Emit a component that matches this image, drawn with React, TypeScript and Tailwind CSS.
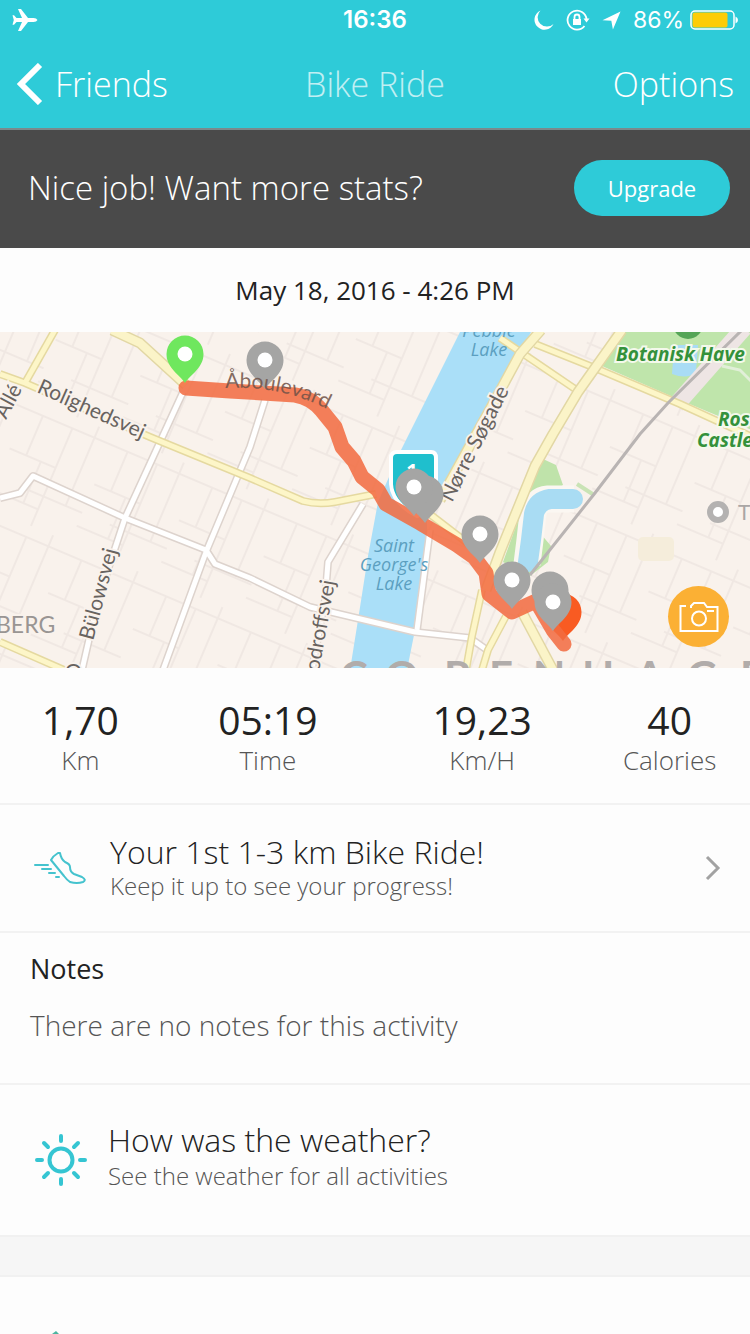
import React from "react";

type Point = { x: number; y: number };

const hiddenPins: Point[] = [
  { x: 425, y: 494 },
  { x: 550, y: 590 },
];

const grayPins: Point[] = [
  { x: 265, y: 360 },
  { x: 414, y: 487 },
  { x: 480, y: 534 },
  { x: 512, y: 580 },
  { x: 553, y: 602 },
];

const yellowRoads = [
  "M0 374 L25 383 L150 437 L250 478 L303 501 Q318 505 335 502 L376 494",
  "M25 383 L55 330",
  "M0 642 L64 670",
  "M500 338 L578 391",
  "M535 344 L595 368 L680 404 L750 436",
  "M427 512 L470 545",
  "M482 590 L472 636 L466 670",
  "M506 616 L488 650 L482 670",
];

const wideYellowRoads = [
  "M112 330 L140 343 L186 385",
  "M541 330 L520 354 L500 391 L440 500",
  "M622 330 L595 368 L578 392 L553 434 L535 466 L500 552 L486 590",
  "M522 612 L553 670",
];

const whiteRoads = [
  "M183 392 L125 518 L98 600 L82 670",
  "M0 498 L20 493 L33 476 L125 518 L206 550 L215 564 L250 578 L310 607 L415 632 L470 638 L487 650",
  "M265 400 L250 447 L206 552 L163 670",
  "M363 504 L328 562 L325 600 L312 670",
  "M430 530 L417 630",
];

const stats = [
  { value: "1,70", label: "Km" },
  { value: "05:19", label: "Time" },
  { value: "19,23", label: "Km/H" },
  { value: "40", label: "Calories" },
];

function Pin({ x, y, color, hole = true }: Point & { color: string; hole?: boolean }) {
  return (
    <g transform={`translate(${x} ${y})`}>
      <path d="M0 29 C-5 21 -18.500 14 -18.500 0 A18.500 18.500 0 1 1 18.500 0 C18.500 14 5 21 0 29Z" fill={color} />
      {hole && <circle r="7.500" fill="#fff" />}
    </g>
  );
}

function Roads({ paths, edge, fill, width }: { paths: string[]; edge: string; fill: string; width: number }) {
  return (
    <g fill="none" strokeLinejoin="round">
      {paths.map((d) => (
        <path key={d} d={d} stroke={edge} strokeWidth={width + 3} />
      ))}
      {paths.map((d) => (
        <path key={d} d={d} stroke={fill} strokeWidth={width} />
      ))}
    </g>
  );
}

function RouteMap() {
  return (
    <svg viewBox="0 332 750 336" className="block w-full" role="img" aria-label="Route map">
      <defs>
        <pattern id="blocks" width="92" height="118" patternUnits="userSpaceOnUse" patternTransform="rotate(23)">
          <path
            d="M0 12H92M0 55H50M30 86H92M18 12V55M50 12V118M74 0V86M0 100H50M34 55V100"
            fill="none"
            stroke="#f0e8e3"
            strokeWidth="2"
          />
        </pattern>
        <path id="boulevard" d="M225 388 Q285 385 334 413" />
      </defs>
      <rect x="0" y="332" width="750" height="336" fill="#f9f2ec" />
      <rect x="0" y="332" width="750" height="336" fill="url(#blocks)" />
      <rect x="638" y="537" width="36" height="24" rx="5" fill="#f5eddb" />

      <path d="M461 330 L532 330 L505 385 L440 495 L427 520 L427 556 L416 625 L407 670 L350 670 L358 620 L368 556 L378 502 L400 452Z" fill="#aadff8" />
      <path d="M620 330 H752 V430 L680 400 L602 366Z" fill="#bfe5ab" />
      <path d="M674 345 H698 L696 372 Q688 380 672 374Z" fill="#a9dcf5" />
      <path d="M744 328 L676 405" stroke="#eee5e4" strokeWidth="17" />
      <path d="M722 366 L740 370 L752 382" fill="none" stroke="#e1efd8" strokeWidth="3" />
      <path d="M543 459 L556 465 L563 485 L544 500 L540 533 L551 546 L548 562 L530 576 L503 562 L520 515Z" fill="#bfe3aa" />
      <path d="M574 499 L548 499 Q536 500 533 513 L530 540 L527 564" fill="none" stroke="#fbf7f2" strokeWidth="27" />
      <path d="M573 499 L550 499 Q537 501 534 514 L531 540 L528 562" fill="none" stroke="#a9dcf3" strokeWidth="20" strokeLinecap="round" />
      <path d="M577 484 L594 495" stroke="#c9e3b5" strokeWidth="4" />

      <Roads paths={whiteRoads} edge="#ddd3cd" fill="#fff" width={5} />
      <Roads paths={yellowRoads} edge="#e5d9a0" fill="#fdf6c8" width={5} />
      <Roads paths={wideYellowRoads} edge="#e2d7a4" fill="#fbf4c8" width={8} />
      <path d="M744 328 L668 403 L640 434 L595 493 L530 575" fill="none" stroke="#b9b4b3" strokeWidth="3" />

      <g className="font-['Lato','Open_Sans',sans-serif]" fill="#68635f">
        <g stroke="#f9f2ec" strokeWidth="4" paintOrder="stroke" fontSize="21">
          <text transform="translate(36 392) rotate(24)">Rolighedsvej</text>
          <text transform="translate(6 420) rotate(-62)">Allé</text>
          <text transform="translate(93 641) rotate(-75)">Bülowsvej</text>
          <text transform="translate(319 672) rotate(-80)">odroffsvej</text>
          <text transform="translate(452 503) rotate(-63)">Nørre Søgade</text>
          <text x="65" y="679">O</text>
        </g>
        <text x="-4" y="633" fontSize="23" fill="#999593" stroke="#f9f2ec" strokeWidth="4" paintOrder="stroke">BERG</text>
        <g fill="#5c9fc0" fontStyle="italic" fontSize="18" textAnchor="middle" className="font-['Open_Sans',sans-serif]">
          <text x="489" y="337">Pebble</text>
          <text x="489" y="356">Lake</text>
          <text x="394" y="552">Saint</text>
          <text x="394" y="571">George's</text>
          <text x="394" y="590">Lake</text>
        </g>
        <g fill="#34913b" fontStyle="italic" fontWeight="700" fontSize="19" stroke="#f4f9ec" strokeWidth="4" paintOrder="stroke" className="font-['Open_Sans',sans-serif]">
          <text x="616" y="361">Botanisk Have</text>
          <text x="718" y="426">Rosenborg</text>
          <text x="697" y="447">Castle</text>
        </g>
        <circle cx="688" cy="324" r="15" fill="#55a557" />
        <circle cx="718" cy="512" r="8" fill="#fff" stroke="#b4b2b1" strokeWidth="6" />
        <text x="738" y="520" fontSize="21" fill="#aaa6a4">T</text>
        <text x="340 385 444 489 533 582 635 687 740" y="692" fontSize="42" fontWeight="700" fill="#b1acaa">COPENHAGE</text>
      </g>

      <path d="M397 452 H431 Q436 452 436 458 V492 Q434 510 417 516 Q392 503 391 484 V458 Q391 452 397 452Z" fill="#1fbfcd" stroke="#fff" strokeWidth="4" />
      <text x="412" y="478" textAnchor="middle" fontSize="20" fontWeight="700" fill="#fff" className="font-['Open_Sans',sans-serif]">1</text>
      <Pin x={563} y={612} color="#f95b22" hole={false} />
      <path
        d="M186 388 L230 391 L295 395 Q312 398 322 411 L335 427 L342 447 L354 461 L362 477 L378 490 L386 504 L420 523 L457 545 L474 557 L486 573 L489 594 L512 612 L536 601 L553 630 L564 644"
        fill="none"
        stroke="#f26b40"
        strokeWidth="15"
        strokeLinecap="round"
        strokeLinejoin="round"
        opacity="0.86"
      />
      <Pin x={185} y={354} color="#6fe75e" />
      {hiddenPins.map((p) => (
        <Pin key={`${p.x}-${p.y}`} x={p.x} y={p.y} color="#a5a5a4" hole={false} />
      ))}
      {grayPins.map((p) => (
        <Pin key={`${p.x}-${p.y}`} x={p.x} y={p.y} color="#a5a5a4" />
      ))}
      <text fontSize="21" fill="#6f5147" fillOpacity="0.85" className="font-['Lato','Open_Sans',sans-serif]">
        <textPath href="#boulevard">Åboulevard</textPath>
      </text>
    </svg>
  );
}

function StatusBar() {
  return (
    <div className="grid h-10 grid-cols-3 items-center px-3 font-['Inter',sans-serif] text-2xl text-white">
      <svg width="26" height="24" viewBox="0 0 26 24" fill="#fff" aria-label="Airplane mode">
        <path d="M25.500 12 Q24.500 10 21.500 10 H16 L9 1 H6 L10 10 H4.500 L2 7.300 H0.500 L1.800 12 L0.500 16.700 H2 L4.500 14 H10 L6 23 H9 L16 14 H21.500 Q24.500 14 25.500 12Z" />
      </svg>
      <span className="text-center font-semibold">16:36</span>
      <div className="flex items-center justify-end gap-3">
        <svg width="20" height="20" viewBox="0 0 20 20" fill="#fff" className="shrink-0" aria-hidden="true">
          <path d="M6.500 0.500 A10 10 0 1 0 19.500 14 A8.600 8.600 0 0 1 6.500 0.500Z" />
        </svg>
        <svg width="24" height="22" viewBox="0 0 24 22" className="shrink-0" fill="none" stroke="#fff" strokeWidth="1.800" aria-hidden="true">
          <path d="M20.500 10 A9.500 9.500 0 1 0 18.500 17" />
          <path d="M17.500 9.500 H23.500 L20.500 13.500Z" fill="#fff" stroke="none" />
          <rect x="7" y="10" width="8" height="6" fill="#fff" stroke="none" />
          <path d="M8.500 10 V8 A2.500 2.500 0 0 1 13.500 8 V10" />
        </svg>
        <svg width="19" height="19" viewBox="0 0 20 20" fill="#fff" className="shrink-0" aria-hidden="true">
          <path d="M19.500 0.500 L0.500 9.800 L9.800 10.200 L11.500 19.500Z" />
        </svg>
        <span className="flex items-center gap-1.5 text-[23px]">
          86%
          <svg width="48" height="20" viewBox="0 0 48 20" className="shrink-0" aria-label="Battery">
            <rect x="1" y="1" width="43" height="18" rx="4" fill="none" stroke="#fff" strokeWidth="1.500" />
            <rect x="2.500" y="2.500" width="35" height="15" rx="2" fill="#fdcc08" />
            <path d="M45.500 6.500 Q48 7.500 48 10 Q48 12.500 45.500 13.500Z" fill="#fff" />
          </svg>
        </span>
      </div>
    </div>
  );
}

export default function App() {
  return (
    <main className="min-h-screen bg-[#fdfdfd] font-['Open_Sans','Noto_Sans',sans-serif] text-[#222]">
      <header className="border-b-2 border-[#7a8a8c] bg-[#2ecbd8] text-white">
        <StatusBar />
        <nav className="grid h-[88px] grid-cols-3 items-center px-4 text-[34px] font-light">
          <a href="#friends" className="flex items-center gap-3">
            <svg width="27" height="42" viewBox="0 0 27 42" fill="none" stroke="#fff" strokeWidth="6" aria-hidden="true">
              <path d="M24 2 L5 21 L24 40" />
            </svg>
            Friends
          </a>
          <h1 className="text-center opacity-70">Bike Ride</h1>
          <button className="text-right">Options</button>
        </nav>
      </header>

      <section className="flex h-[118px] items-center justify-between bg-[#4a4a4a] pr-5 pb-0.5 pl-7 text-white">
        <p className="text-[33px] font-light">Nice job! Want more stats?</p>
        <button className="h-14 w-[156px] rounded-full bg-[#2ecbd8] text-[22px] font-medium">Upgrade</button>
      </section>

      <time dateTime="2016-05-18T16:26" className="flex h-[84px] items-center justify-center text-[26px] font-medium">
        May 18, 2016 - 4:26 PM
      </time>

      <section className="relative">
        <RouteMap />
        <button aria-label="Add photo" className="absolute right-[21px] bottom-[21px] flex size-[61px] items-center justify-center rounded-full bg-[#fbb034]">
          <svg width="40" height="32" viewBox="0 0 40 32" fill="none" stroke="#fff" strokeWidth="2" aria-hidden="true">
            <path d="M7 5 H1.500 V30 H38.500 V6 H28 L25 2 H15 L12 5 V7" />
            <circle cx="20" cy="17.500" r="7" />
            <path d="M28 10 H35" />
          </svg>
        </button>
      </section>

      <dl className="grid h-[137px] grid-cols-[3fr_4fr_4fr_3fr] border-b-2 border-[#f2f2f2] pt-7 text-center">
        {stats.map((s) => (
          <div key={s.label} className="flex flex-col-reverse justify-end">
            <dt className="text-[26px] leading-8 font-light text-[#555]">{s.label}</dt>
            <dd className="text-[39px] leading-12 font-medium">{s.value}</dd>
          </div>
        ))}
      </dl>

      <a href="#progress" className="flex h-32 items-center border-b-2 border-[#f2f2f2] pr-7 pl-8">
        <svg width="54" height="36" viewBox="0 0 54 36" className="shrink-0" fill="none" stroke="#45c3ce" strokeWidth="2" strokeLinecap="round" strokeLinejoin="round" aria-hidden="true">
          <path d="M19 10 Q21 6 26 3 H28 Q29 9 33 12 Q38 14 38 17 Q38 22 42 24 L50 27 Q55 30 51 32 Q45 34 38 32 Q35 30 32 26Z" />
          <path d="M3 15 H16 M10 19 H19 M17 23 H23 M24 27 H27" />
        </svg>
        <span className="ml-6 grow">
          <span className="block text-[32px] leading-9 font-light">Your 1st 1-3 km Bike Ride!</span>
          <span className="block text-2xl leading-8 font-light text-[#555]">Keep it up to see your progress!</span>
        </span>
        <svg width="18" height="28" viewBox="0 0 18 28" fill="none" stroke="#a2a2a2" strokeWidth="3" aria-hidden="true">
          <path d="M3 3 L14 14 L3 25" />
        </svg>
      </a>

      <section className="h-[152px] border-b-2 border-[#f2f2f2] px-[30px] pt-4">
        <h2 className="text-[27px] leading-10 font-medium">Notes</h2>
        <p className="mt-4 text-[28px] leading-10 font-light text-[#555]">There are no notes for this activity</p>
      </section>

      <a href="#weather" className="flex h-[150px] items-center pl-[34px]">
        <svg width="54" height="54" viewBox="0 0 54 54" className="shrink-0" fill="none" stroke="#35c5d2" strokeWidth="4" strokeLinecap="round" aria-hidden="true">
          <circle cx="27" cy="27" r="11.500" />
          <path d="M27 3V8M27 46V51M3 27H8M46 27H51M10 10L14 14M40 40L44 44M10 44L14 40M40 14L44 10" />
        </svg>
        <span className="ml-5 pb-2">
          <span className="block text-[32px] leading-10 font-light">How was the weather?</span>
          <span className="block text-2xl leading-8 font-light text-[#555]">See the weather for all activities</span>
        </span>
      </a>

      <div className="h-[42px] border-y-2 border-[#f1f1f1] bg-[#f6f6f6]" />
      <div className="flex h-[57px] items-end pl-[52px]">
        <svg width="10" height="4" viewBox="0 0 10 4" fill="#4db5a0" aria-hidden="true">
          <path d="M0 4 L4 1 L7 4Z" />
        </svg>
      </div>
    </main>
  );
}
